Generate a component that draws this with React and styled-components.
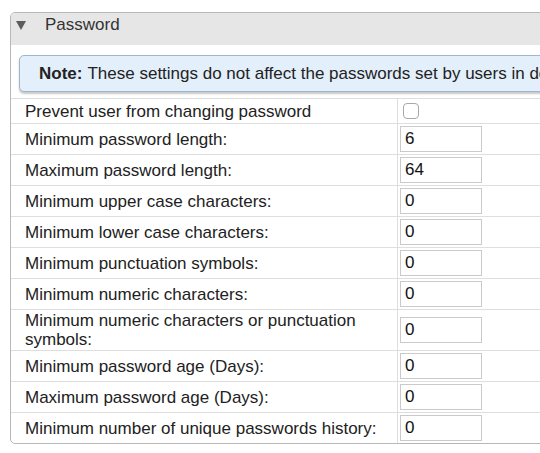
import styled, { createGlobalStyle } from "styled-components";

const GlobalStyle = createGlobalStyle`
  html, body {
    margin: 0;
    padding: 0;
    background: #ffffff;
    overflow: hidden;
  }
  body {
    font-family: "Liberation Sans", Arial, sans-serif;
    color: #222;
  }
`;

const Page = styled.div`
  width: 540px;
  height: 453px;
  overflow: hidden;
  padding: 12px 0 0 10px;
  box-sizing: border-box;
`;

const Panel = styled.section`
  width: 660px;
  border: 1px solid #b8b8b8;
  border-radius: 5px;
  overflow: hidden;
  background: #fff;
`;

const Header = styled.div`
  height: 32px;
  box-sizing: border-box;
  background: #e6e6e6;
  display: flex;
  align-items: flex-start;
  padding: 2px 0 0 5px;
  gap: 19px;
  font-size: 17px;
  line-height: 19px;
  color: #333;
`;

const Caret = styled.span`
  width: 0;
  height: 0;
  border-left: 5px solid transparent;
  border-right: 5px solid transparent;
  border-top: 9px solid #5c5c5c;
  margin-top: 6px;
`;

const Note = styled.div`
  margin: 10px 8px 6px 8px;
  height: 37px;
  box-sizing: border-box;
  display: flex;
  align-items: center;
  padding-left: 19px;
  background: #e3effa;
  border: 1px solid #9fb6cd;
  border-radius: 5px;
  box-shadow: 0 2px 2px rgba(0, 0, 0, 0.22);
  font-size: 17px;
  color: #222;
  white-space: nowrap;

  b {
    margin-right: 5px;
  }
`;

const Table = styled.div`
  border-top: 1px solid #dedede;
`;

const Row = styled.div`
  display: grid;
  grid-template-columns: 387px 1fr;
  min-height: ${(p) => (p.$short ? "24px" : "30px")};
  & + & {
    border-top: 1px solid #dedede;
  }
`;

const Label = styled.div`
  display: flex;
  align-items: center;
  padding: 1px 8px 1px 14px;
  border-right: 1px solid #dedede;
  font-size: 17px;
  line-height: 19px;
  color: #222;
`;

const Value = styled.div`
  display: flex;
  align-items: center;
  padding-left: 2px;
`;

const NumberInput = styled.input`
  width: 82px;
  height: 26px;
  box-sizing: border-box;
  border: 1px solid #cacaca;
  padding: 0 4px;
  font-family: "Liberation Sans", Arial, sans-serif;
  font-size: 17px;
  color: #111;
  outline: none;
  background: #fff;
`;

const Check = styled.span`
  width: 16px;
  height: 16px;
  box-sizing: border-box;
  margin-left: 3px;
  border: 1px solid #a8a8a8;
  border-radius: 4px;
  background: #fff;
`;

const fields = [
  ["Minimum password length:", "6"],
  ["Maximum password length:", "64"],
  ["Minimum upper case characters:", "0"],
  ["Minimum lower case characters:", "0"],
  ["Minimum punctuation symbols:", "0"],
  ["Minimum numeric characters:", "0"],
  ["Minimum numeric characters or punctuation symbols:", "0"],
  ["Minimum password age (Days):", "0"],
  ["Maximum password age (Days):", "0"],
  ["Minimum number of unique passwords history:", "0"],
];

const App = () => {
  return (
    <>
      <GlobalStyle />
      <Page>
        <Panel>
          <Header>
            <Caret />
            <span>Password</span>
          </Header>
          <Note>
            <b>Note:</b> These settings do not affect the passwords set by users in domain
          </Note>
          <Table>
            <Row $short>
              <Label>Prevent user from changing password</Label>
              <Value>
                <Check />
              </Value>
            </Row>
            {fields.map(([label, value]) => (
              <Row key={label}>
                <Label>{label}</Label>
                <Value>
                  <NumberInput defaultValue={value} />
                </Value>
              </Row>
            ))}
          </Table>
        </Panel>
      </Page>
    </>
  );
};

export default App;
